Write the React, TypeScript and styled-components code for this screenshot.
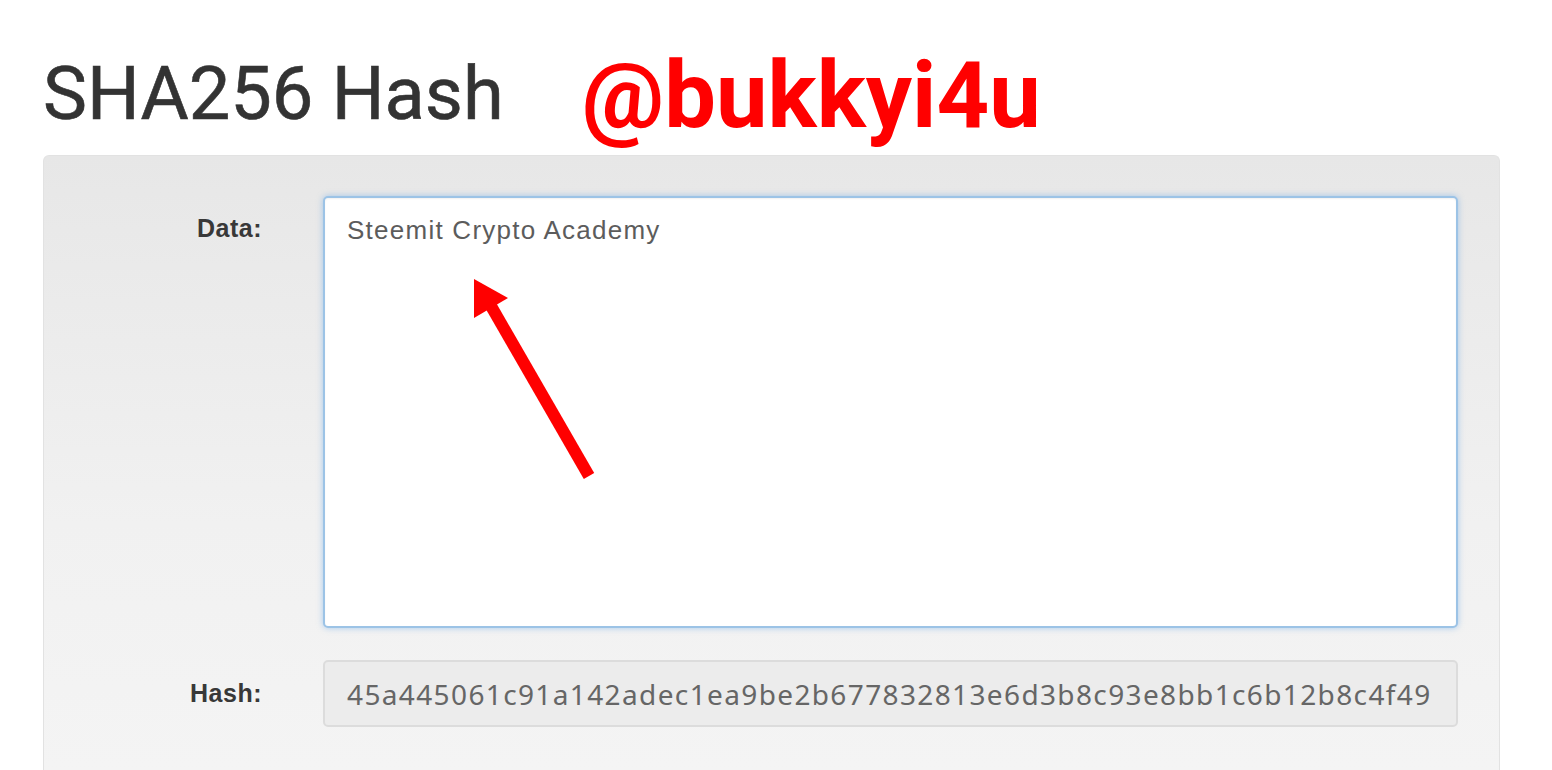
import React from "react";
import styled, { createGlobalStyle } from "styled-components";

const GlobalStyle = createGlobalStyle`
  html, body {
    margin: 0;
    padding: 0;
    background: #ffffff;
    overflow: hidden;
  }
`;

const HASH = "45a445061c91a142adec1ea9be2b677832813e6d3b8c93e8bb1c6b12b8c4f49";

const Page = styled.div`
  width: 1552px;
  height: 770px;
  padding-left: 43px;
  box-sizing: border-box;
`;

const Header = styled.div`
  display: flex;
  align-items: flex-start;
  gap: 78px;
  height: 155px;
  padding-top: 50px;
  box-sizing: border-box;
`;

const Title = styled.h1`
  margin: 7px 0 0;
  font-family: Roboto, "Liberation Sans", sans-serif;
  font-weight: 400;
  font-size: 74px;
  line-height: 1;
  color: #333333;
  -webkit-text-stroke: 0.6px #333333;
`;

const Handle = styled.span`
  font-family: Roboto, "Liberation Sans", sans-serif;
  font-weight: 700;
  font-size: 92px;
  line-height: 1;
  color: #ff0000;
`;

const Panel = styled.div`
  width: 1457px;
  height: 615px;
  box-sizing: border-box;
  padding: 40px 41px 0 0;
  border: 1px solid #e2e2e2;
  border-bottom: none;
  border-radius: 6px 6px 0 0;
  background: linear-gradient(180deg, #e7e7e7 0%, #f1f1f1 60%, #f4f4f4 100%);
  display: grid;
  grid-template-columns: 218px 1fr;
  grid-template-rows: 432px 67px;
  column-gap: 61px;
  row-gap: 32px;
`;

const Label = styled.label<{ $top?: number }>`
  justify-self: end;
  align-self: ${({ $top }) => ($top !== undefined ? "start" : "center")};
  padding-top: ${({ $top }) => $top ?? 0}px;
  font-family: "Liberation Sans", Arial, sans-serif;
  font-weight: 700;
  font-size: 25px;
  letter-spacing: 0.5px;
  color: #383838;
`;

const FieldWrap = styled.div`
  position: relative;
`;

const DataBox = styled.div`
  height: 100%;
  box-sizing: border-box;
  padding: 17px 22px;
  background: #ffffff;
  border: 2px solid #9cc3e6;
  border-radius: 5px;
  box-shadow: 0 0 6px rgba(102, 165, 230, 0.55), inset 0 1px 2px rgba(0, 0, 0, 0.06);
  font-family: "Liberation Sans", Arial, sans-serif;
  font-size: 26px;
  letter-spacing: 1.25px;
  color: #5c5c5c;
`;

const HashBox = styled.div`
  height: 100%;
  box-sizing: border-box;
  padding: 0 22px;
  display: flex;
  align-items: center;
  background: #ececec;
  border: 2px solid #dcdcdc;
  border-radius: 5px;
  font-family: "Noto Sans", "Open Sans", sans-serif;
  font-size: 28px;
  letter-spacing: 1.37px;
  color: #666666;
  white-space: nowrap;
  overflow: hidden;
`;

const Arrow = styled.svg`
  position: absolute;
  left: 0;
  top: 0;
  pointer-events: none;
`;

const App = () => {
  return (
    <Page>
      <GlobalStyle />
      <Header>
        <Title>SHA256 Hash</Title>
        <Handle>@bukkyi4u</Handle>
      </Header>
      <Panel>
        <Label $top={18}>Data:</Label>
        <FieldWrap>
          <DataBox>Steemit Crypto Academy</DataBox>
          <Arrow width="300" height="300" viewBox="0 0 300 300">
            {/* drawn in page coords, shifted by the textarea origin */}
            <g transform="translate(-322 -196)">
              <line
                x1="588"
                y1="476"
                x2="490"
                y2="306"
                stroke="#ff0000"
                strokeWidth="12"
              />
              <polygon points="473,279 473,318 507,298" fill="#ff0000" />
            </g>
          </Arrow>
        </FieldWrap>
        <Label>Hash:</Label>
        <HashBox>{HASH}</HashBox>
      </Panel>
    </Page>
  );
};

export default App;
